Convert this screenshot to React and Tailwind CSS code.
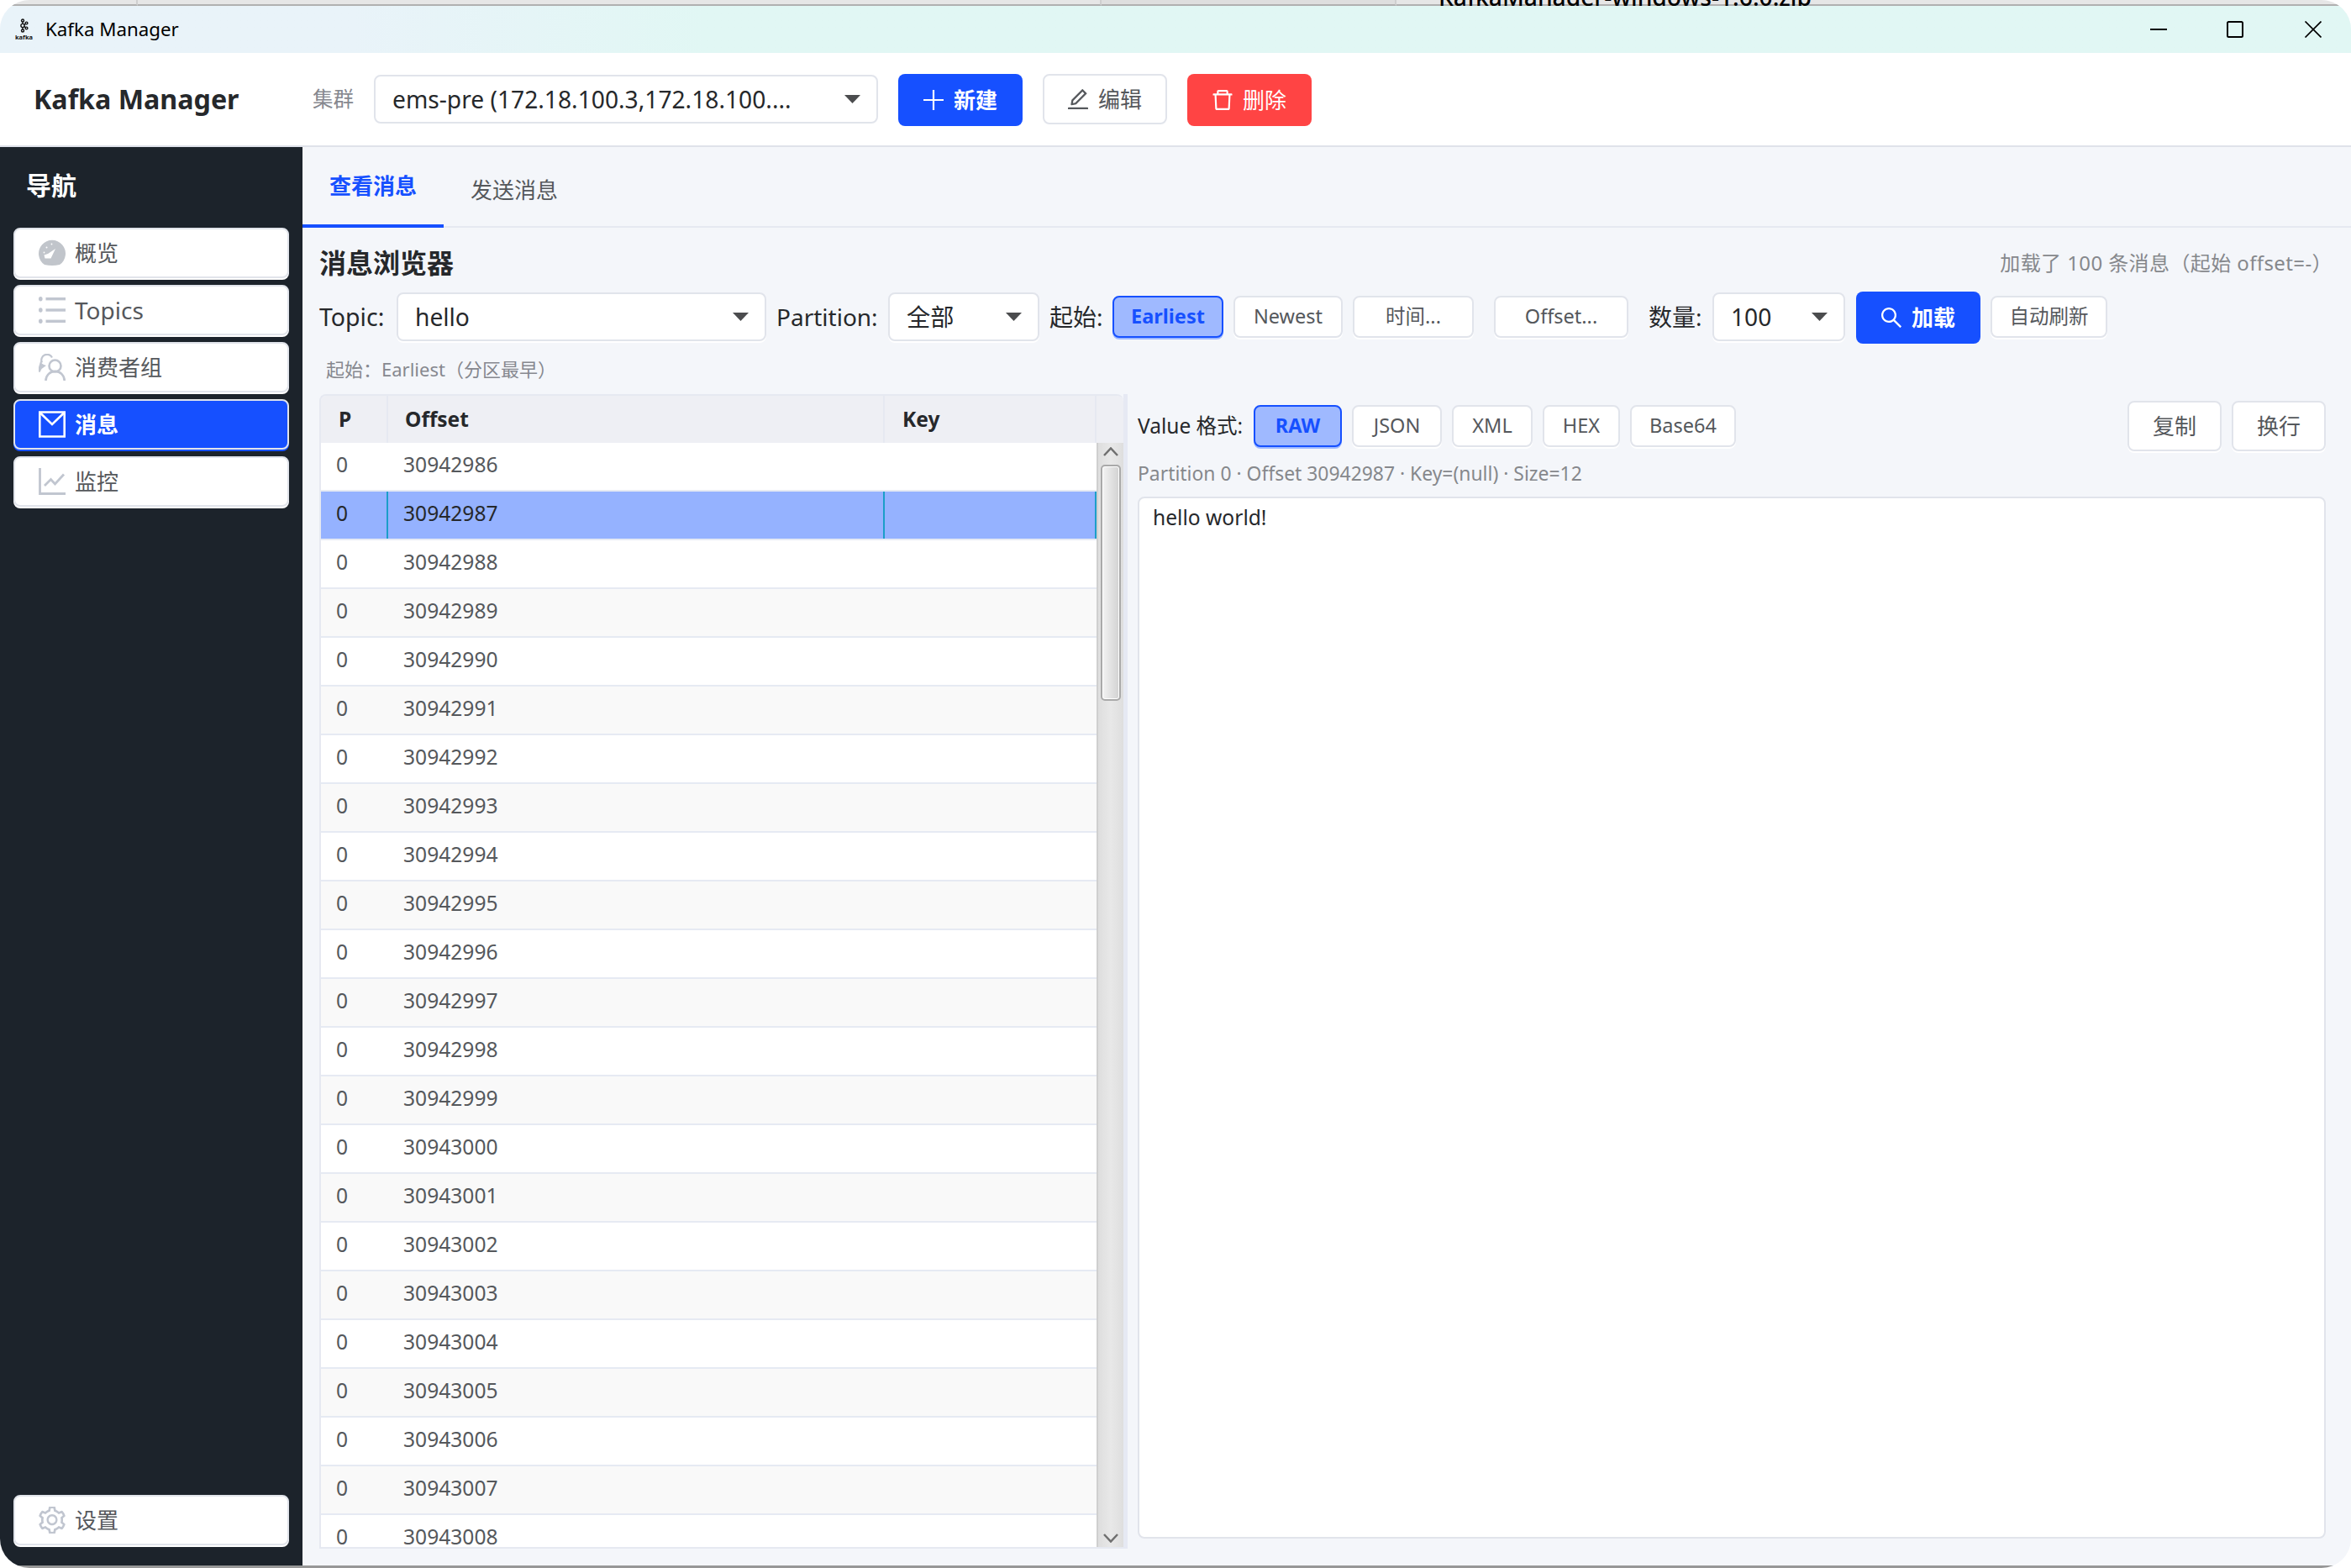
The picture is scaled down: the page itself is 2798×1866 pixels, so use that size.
import { useState } from "react"
import clsx from "clsx"
import { AiOutlineDelete, AiOutlineEdit, AiOutlineSearch, AiOutlineSetting } from "react-icons/ai"

const FIRST_OFFSET = 30942986
const ROWS = Array.from({ length: 23 }, (_, i) => ({ partition: 0, offset: FIRST_OFFSET + i, key: "" }))
const FORMATS = [
  { name: "RAW", width: "w-[105px]" },
  { name: "JSON", width: "w-[107px]" },
  { name: "XML", width: "w-[96px]" },
  { name: "HEX", width: "w-[92px]" },
  { name: "Base64", width: "w-[126px]" },
]

function KafkaLogo() {
  return (
    <svg className="w-[22px] h-[26px]" viewBox="0 0 22 26" fill="none" stroke="#111" strokeWidth="1.4">
      <circle cx="9" cy="2.5" r="1.5" />
      <circle cx="9" cy="8.5" r="2.1" />
      <circle cx="9" cy="14.500" r="1.5" />
      <circle cx="13.500" cy="5.500" r="1.4" />
      <circle cx="13.500" cy="11.500" r="1.4" />
      <path d="M9 4v2.500M9 10.500v2.500M10.800 7.500l1.500-1M10.800 9.500l1.500 1" />
      <text x="0" y="24.500" fontSize="7.500" fontWeight="700" fill="#111" stroke="none" textLength="21" lengthAdjust="spacingAndGlyphs">kafka</text>
    </svg>
  )
}

function DashboardIcon() {
  return (
    <svg className="w-8 h-8" viewBox="0 0 32 32">
      <path d="M7 30A16 16 0 1 1 25 30Q16 32 7 30Z" fill="#c1c5cb" />
      <path d="M6.5 18.5 11 17l9-6-5.5 11.5H7.5z" fill="#fff" />
      <circle cx="9.5" cy="9.5" r="1" fill="#fff" />
      <circle cx="15.5" cy="5.5" r="0.9" fill="#fff" />
      <circle cx="6.5" cy="15.5" r="0.9" fill="#fff" />
    </svg>
  )
}

function ListIcon() {
  return (
    <svg className="w-8 h-8" viewBox="0 0 32 32" fill="#c1c6d0">
      {[2.7, 16, 29.3].map(y => (
        <g key={y}>
          <ellipse cx="2.3" cy={y} rx="2.3" ry="2.7" />
          <rect x="8.5" y={y - 1.7} width="23.5" height="3.4" />
        </g>
      ))}
    </svg>
  )
}

function GroupIcon() {
  return (
    <svg className="w-8 h-8" viewBox="0 0 32 32" fill="none" stroke="#c1c6d0" strokeWidth="2.6">
      <circle cx="19.5" cy="14.5" r="7" />
      <path d="M8.5 32a11 11 0 0 1 22.2 0" />
      <path d="M4 10.5A6.5 6.5 0 0 1 16 4.5" strokeWidth="2.2" />
      <path d="M2.5 7.5C3 12 5 12.500 9 14L3.5 18 1.5 22 0 21.5V16z" fill="#c1c6d0" stroke="none" />
    </svg>
  )
}

function MailIcon() {
  return (
    <svg className="w-8 h-8" viewBox="0 0 32 32" fill="none" stroke="#fff" strokeWidth="2.6">
      <path d="M1.3 1.5h29.4v29H1.3z" />
      <path d="M2 2.5 16 16 30 2.5" />
    </svg>
  )
}

function ChartIcon() {
  return (
    <svg className="w-8 h-8" viewBox="0 0 32 32" fill="none" stroke="#c1c6d0" strokeWidth="2.8">
      <path d="M1.5 0v30.5H32" />
      <path d="M7 21l7.500-7.500 5 5.500L30 7.500" />
    </svg>
  )
}

const NAV = [
  { label: "概览", icon: DashboardIcon },
  { label: "Topics", icon: ListIcon, size: "text-[28px]" },
  { label: "消费者组", icon: GroupIcon },
  { label: "消息", icon: MailIcon },
  { label: "监控", icon: ChartIcon },
]

function NavButton({ active, icon, size = "text-[26px]", children, onClick }) {
  return (
    <button
      onClick={onClick}
      className={clsx(
        "flex items-center gap-[11px] h-[60px] w-full pl-7 rounded-[8px] border-2 border-[#e1e4eb] leading-none",
        size,
        active ? "bg-[#1650ff] text-white font-bold shadow-[0_2px_0_#1650ff]" : "bg-white text-[#55585c] shadow-[0_2px_0_#fff]"
      )}
    >
      {icon}
      <span>{children}</span>
    </button>
  )
}

function Select({ value, className }) {
  return (
    <div className={clsx("flex items-center justify-between shrink-0 h-[58px] pl-5 pr-[19px] bg-white border-2 border-[#e1e4eb] rounded-[8px] text-[28.2px] leading-none text-[#26282b] shadow-[0_2px_0_#fff]", className)}>
      <span className="whitespace-nowrap">{value}</span>
      <svg className="w-[19px] h-[10px]" viewBox="0 0 19 10"><path d="M0 0h19L9.5 10z" fill="#4b4c4e" /></svg>
    </div>
  )
}

function Chip({ active, className, children, onClick }) {
  return (
    <button
      onClick={onClick}
      className={clsx(
        "flex items-center justify-center shrink-0 h-[50px] rounded-[8px] border-2 leading-none whitespace-nowrap",
        active
          ? "bg-[#9fb9ff] border-[#1650ff] text-[#1650ff] font-bold text-[23.5px] shadow-[0_2px_0_#9fb9ff]"
          : "bg-white border-[#e1e4eb] text-[#55585c] text-[23.5px] shadow-[0_2px_0_#fff]",
        className
      )}
    >
      {children}
    </button>
  )
}

function TitleBar() {
  return (
    <div className="flex items-center justify-between h-14 shrink-0 pl-[18px] pr-[35px] bg-linear-to-r from-[#e9f3f9] from-15% to-[#e1f7f4] to-30%">
      <div className="flex items-center gap-[14px]">
        <KafkaLogo />
        <span className="text-[22.3px] leading-none text-black">Kafka Manager</span>
      </div>
      <svg className="w-[204px] h-5" viewBox="0 0 204 20" fill="none" stroke="#000" strokeWidth="2">
        <path d="M0 10h20" />
        <rect x="92" y="1" width="18" height="18" rx="1.5" />
        <path d="M184.5 0.5l19 19M203.5 0.5l-19 19" strokeWidth="1.7" />
      </svg>
    </div>
  )
}

function Header() {
  return (
    <header className="flex items-start shrink-0 h-28 pt-[25px] pl-10 bg-white border-b-2 border-[#dfe2ea]">
      <h1 className="w-[332px] h-[60px] flex items-center text-[32.2px] leading-none font-bold text-[#26282b]">Kafka Manager</h1>
      <span className="w-[73px] h-[61px] flex items-center text-[24.5px] leading-none text-[#86888f]">集群</span>
      <Select value="ems-pre (172.18.100.3,172.18.100...." className="w-[600px] mt-px mr-6" />
      <div className="flex gap-6 text-[26px] leading-none">
        <button className="flex items-center justify-center gap-3 w-[148px] h-[62px] rounded-[8px] bg-[#1650ff] text-white font-bold">
          <svg className="w-6 h-6" viewBox="0 0 24 24" stroke="#fff" strokeWidth="2.2"><path d="M12 0v24M0 12h24" /></svg>
          新建
        </button>
        <button className="flex items-center justify-center gap-3 w-[148px] h-[60px] rounded-[8px] border-2 border-[#e1e4eb] bg-white text-[#55585c]">
          <AiOutlineEdit className="w-6 h-6" viewBox="112 112 800 800" />
          编辑
        </button>
        <button className="flex items-center justify-center gap-3 w-[148px] h-[62px] rounded-[8px] bg-[#ff4444] text-white">
          <AiOutlineDelete className="w-6 h-6" viewBox="112 112 800 800" />
          删除
        </button>
      </div>
    </header>
  )
}

function Sidebar() {
  const [current, setCurrent] = useState("消息")

  return (
    <aside className="flex flex-col shrink-0 w-[360px] px-4 pb-6 bg-[#1c232b]">
      <div className="h-24 pt-[31px] pl-[15px] text-[30px] leading-none font-bold text-white">导航</div>
      <nav className="flex flex-col gap-2">
        {NAV.map(({ label, icon: Icon, size }) => (
          <NavButton key={label} active={label === current} icon={<Icon />} size={size} onClick={() => setCurrent(label)}>
            {label}
          </NavButton>
        ))}
      </nav>
      <div className="mt-auto">
        <NavButton icon={<AiOutlineSetting className="w-8 h-8 text-[#c1c6d0]" viewBox="88 80 848 864" />}>设置</NavButton>
      </div>
    </aside>
  )
}

function Filters() {
  const [start, setStart] = useState("Earliest")

  return (
    <div className="flex items-center h-[62px] text-[28.5px] leading-none text-[#26282b] whitespace-nowrap">
      <span className="w-[92px] shrink-0 pb-[2px]">Topic:</span>
      <Select value="hello" className="w-[440px] mr-3 mb-[2px]" />
      <span className="w-[133px] shrink-0 pb-[2px] text-[28px]">Partition:</span>
      <Select value="全部" className="w-[180px] mr-3 mb-[2px]" />
      <span className="w-[75px] shrink-0 pb-[2px] text-[28px]">起始:</span>
      <Chip active={start === "Earliest"} onClick={() => setStart("Earliest")} className="w-[132px] mr-3 mb-[2px]">Earliest</Chip>
      <Chip active={start === "Newest"} onClick={() => setStart("Newest")} className="w-[130px] mr-3 mb-[2px]">Newest</Chip>
      <Chip className="w-[144px] mr-6 mb-[2px]">时间...</Chip>
      <Chip className="w-[160px] mr-6 mb-[2px]">Offset...</Chip>
      <span className="w-[76px] shrink-0 pb-[2px] text-[28px]">数量:</span>
      <Select value="100" className="w-[158px] mr-[13px] mb-[2px]" />
      <button className="flex items-center justify-center gap-3 w-[148px] h-[62px] mr-3 rounded-[8px] bg-[#1650ff] text-white text-[26px] font-bold">
        <AiOutlineSearch className="w-6 h-6" viewBox="112 112 800 800" />
        加载
      </button>
      <Chip className="w-[139px] mb-[2px]">自动刷新</Chip>
    </div>
  )
}

function MessageTable({ selected, onSelect }) {
  return (
    <div className="flex flex-col shrink-0 w-[957px] h-[1374px] rounded-t-[8px] border-l-2 border-y-2 border-[#e6e9f1] overflow-hidden">
      <div className="flex shrink-0 h-14 items-stretch bg-[#eeeff4] text-[24.5px] leading-none font-bold text-[#26282b]">
        <div className="flex items-center w-20 pl-[21px] border-r-2 border-[#e6e9f1]">P</div>
        <div className="flex items-center w-[591px] pl-[20px] border-r-2 border-[#e6e9f1]">Offset</div>
        <div className="flex items-center w-[252px] pl-[21px] border-r-2 border-[#e6e9f1]">Key</div>
      </div>
      <div className="flex flex-1 min-h-0">
        <div className="flex-1 overflow-hidden bg-white">
          {ROWS.map((row, i) => {
            const active = row.offset === selected
            const cell = clsx("flex items-center pb-1", active && "border-r-2 border-[#1b9ec9]")
            return (
              <div
                key={row.offset}
                onClick={() => onSelect(row.offset)}
                className={clsx(
                  "flex h-[58px] border-b-2 border-[#e6eaf3] text-[24.6px] leading-none",
                  active ? "bg-[#95b2ff] text-[#26282b]" : "text-[#55585c]",
                  !active && i % 2 === 1 && "bg-[#f9f9f9]"
                )}
              >
                <div className={clsx(cell, "w-20 pl-[18px]")}>{row.partition}</div>
                <div className={clsx(cell, "w-[591px] pl-[18px]")}>{row.offset}</div>
                <div className={clsx(cell, "w-[252px] pl-[18px]")}>{row.key}</div>
              </div>
            )
          })}
        </div>
        <div className="flex flex-col items-center justify-between shrink-0 w-8 py-[5px] border-l-2 border-[#cfcfcf] bg-linear-to-r from-[#dedede] via-[#e8e8e8] to-[#dedede]">
          <div className="flex flex-col items-center gap-[10px]">
            <svg className="w-[18px] h-[11px]" viewBox="0 0 18 11" fill="none" stroke="#6f6f6f" strokeWidth="2.5"><path d="M1 10l8-8.500L17 10" /></svg>
            <div className="w-6 h-[281px] rounded-[5px] border-2 border-[#a9a9a9] bg-linear-to-r from-[#f3f3f3] to-[#d2d2d2] shadow-[inset_0_0_0_1px_#fff]" />
          </div>
          <svg className="w-[18px] h-[11px]" viewBox="0 0 18 11" fill="none" stroke="#6f6f6f" strokeWidth="2.5"><path d="M1 1l8 8.500L17 1" /></svg>
        </div>
      </div>
    </div>
  )
}

function MessageDetail({ offset }) {
  const [format, setFormat] = useState("RAW")

  return (
    <section className="flex flex-col flex-1 ml-3 mr-[30px] pt-2">
      <div className="flex items-center h-[60px] gap-3 text-[#26282b]">
        <span className="w-[126px] text-[24.5px] leading-none whitespace-nowrap">Value 格式:</span>
        {FORMATS.map(f => (
          <Chip key={f.name} active={f.name === format} onClick={() => setFormat(f.name)} className={f.width}>
            {f.name}
          </Chip>
        ))}
        <div className="flex gap-3 ml-auto text-[26px] leading-none text-[#55585c]">
          {["复制", "换行"].map(label => (
            <button key={label} className="w-28 h-[60px] rounded-[8px] border-2 border-[#e1e4eb] bg-white shadow-[0_2px_0_#fff]">{label}</button>
          ))}
        </div>
      </div>
      <div className="flex items-center h-[54px] pt-px text-[22.9px] leading-none text-[#86888c]">
        Partition 0 · Offset {offset} · Key=(null) · Size=12
      </div>
      <div className="h-[1240px] pt-[11px] pl-4 rounded-[8px] border-2 border-[#e1e4eb] bg-white text-[24.6px] leading-none text-[#26282b]">
        hello world!
      </div>
    </section>
  )
}

export default function App() {
  const [selected, setSelected] = useState(30942987)

  return (
    <div className="flex flex-col w-[2798px] h-[1866px] overflow-hidden rounded-[35px] bg-[#f4f6fa] font-['Noto_Sans','Noto_Sans_CJK_SC',sans-serif]">
      {/* Sliver of the window behind */}
      <div className="flex shrink-0 h-[7px] overflow-hidden bg-[#e6e6e6]">
        <div className="w-[164px] h-[7px] border-r-2 border-r-[#cfcfcf] border-b-2 border-b-[#b0b0b0]" />
        <div className="w-[1147px] h-[7px] border-r-2 border-r-[#cfcfcf] border-b-2 border-b-[#b0b0b0]" />
        <div className="w-[351px] h-[7px] border-r-2 border-r-[#cfcfcf] border-b-2 border-b-[#b0b0b0] bg-[#dedede]" />
        <div className="flex-1 h-[7px] pl-[50px] border-b-2 border-[#b0b0b0]">
          <span className="block -mt-[18px] text-[28.2px] leading-none font-medium text-black whitespace-nowrap">KafkaManager-windows-1.6.0.zip</span>
        </div>
      </div>

      <TitleBar />
      <Header />

      <div className="flex flex-1 min-h-0">
        <Sidebar />
        <main className="flex flex-col flex-1 min-w-0">
          {/* Tabs */}
          <div className="flex shrink-0 h-24 border-b-2 border-[#e6e9f1] text-[26px] leading-none">
            <button className="w-[168px] h-24 border-b-4 border-[#1650ff] text-[#1650ff] font-bold">查看消息</button>
            <button className="w-[168px] h-24 pt-[6px] text-[#55585c]">发送消息</button>
          </div>

          <div className="flex flex-col pl-5">
            <div className="flex items-center justify-between h-[76px] pt-2 pr-[22px]">
              <h2 className="text-[32px] leading-none font-bold text-[#26282b]">消息浏览器</h2>
              <span className="text-[24px] leading-none tracking-[0.4px] text-[#86888c]">加载了 100 条消息（起始 offset=-）</span>
            </div>
            <Filters />
            <div className="flex items-center h-[60px] pl-2 text-[22px] leading-none text-[#86888f]">起始：Earliest（分区最早）</div>
            <div className="flex">
              <MessageTable selected={selected} onSelect={setSelected} />
              <div className="w-[5px] bg-[#e6e9f3]" />
              <MessageDetail offset={selected} />
            </div>
          </div>
        </main>
      </div>

      <div className="shrink-0 h-[3px] bg-[#979797]" />
    </div>
  )
}
